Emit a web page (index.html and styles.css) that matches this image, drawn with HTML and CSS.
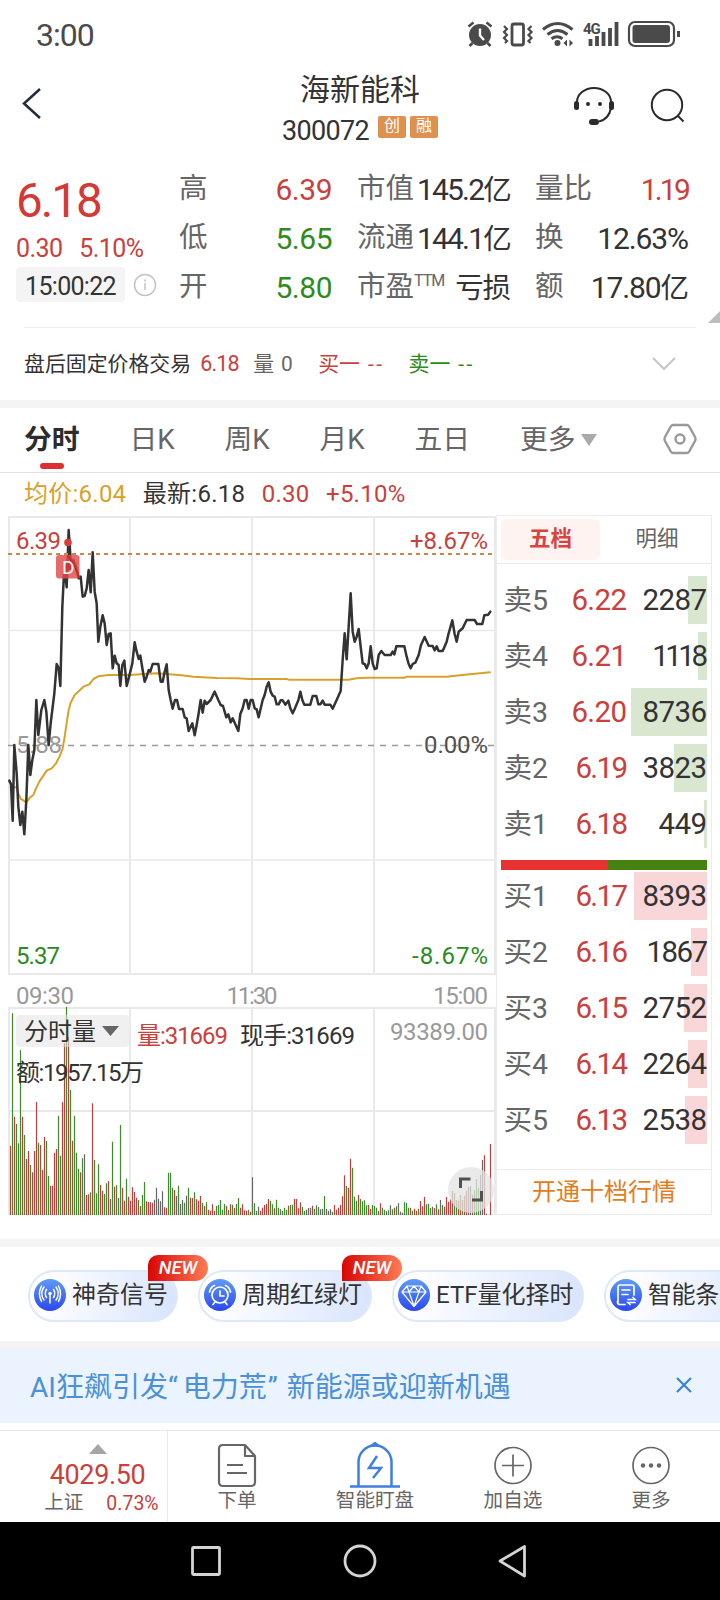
FILE: index.html
```html
<!DOCTYPE html>
<html lang="zh-CN">
<head>
<meta charset="utf-8">
<title>海新能科 300072</title>
<link rel="stylesheet" href="styles.css">
</head>
<body>
<div class="status">
  <span class="clock">3:00</span>
  <svg class="status-icons" width="216" height="40" viewBox="466 14 216 40" fill="none" stroke="#4a4a4a">
    <circle cx="480" cy="35" r="11" fill="#4a4a4a" stroke="none"/>
    <path d="M468.500 26.500l5-4M491.500 26.500l-5-4M472.500 43l-3 3M487.500 43l3 3" stroke-width="2.600"/>
    <path d="M480 28.500v7l4 4.500" stroke="#fff" stroke-width="2.400"/>
    <rect x="512" y="24" width="11.500" height="21" rx="2" stroke-width="2.800"/>
    <path d="M504 26l3 3-3 3 3 3-3 3 3 3-2 2M531.500 26l-3 3 3 3-3 3 3 3-3 3 2 2" stroke-width="2.200"/>
    <path d="M543 29.500q14.500-12 29.500 0M547.500 34.500q10-8 20 0M551.500 38.700q5.500-4 11 0" stroke-width="3"/>
    <circle cx="557.500" cy="43" r="3" fill="#4a4a4a" stroke="none"/>
    <path d="M563.500 43l3.500-3.500v7zM573 43l-3.500-3.500v7z" fill="#4a4a4a" stroke="none"/>
    <path d="M590.500 46v-7M597 46v-10M603.500 46v-14M610 46v-18M616.500 46v-24" stroke-width="3.800"/>
    <text x="583" y="34" class="net">4G</text>
    <rect x="629" y="22" width="45" height="24" rx="6" stroke-width="2.200"/>
    <rect x="632.500" y="25" width="37.500" height="18" rx="3" fill="#4a4a4a" stroke="none"/>
    <path d="M678.500 31v6" stroke-width="3"/>
  </svg>
</div>

<header class="head">
  <svg class="back" width="22" height="34" viewBox="0 0 22 34" fill="none" stroke="#222c38" stroke-width="2.500"><path d="M18 3L2 17.500 18 32"/></svg>
  <div class="title">
    <h1>海新能科</h1>
    <div class="code"><span>300072</span><i>创</i><i>融</i></div>
  </div>
  <svg class="head-icons" width="116" height="44" viewBox="572 84 116 44" fill="none" stroke="#2b2b2b" stroke-width="2">
    <path d="M577 103v-1a17 14 0 0 1 34 0v6q-2 11-12 13.500"/>
    <rect x="574" y="101" width="5" height="9" rx="2.500" fill="#2b2b2b" stroke="none"/>
    <rect x="609" y="101" width="5" height="9" rx="2.500" fill="#2b2b2b" stroke="none"/>
    <circle cx="588" cy="104" r="2" fill="#2b2b2b" stroke="none"/><circle cx="600" cy="104" r="2" fill="#2b2b2b" stroke="none"/>
    <rect x="589" y="119" width="10" height="6" rx="3" fill="#2b2b2b" stroke="none"/>
    <circle cx="667" cy="105" r="15.200"/><path d="M677.500 115.500l6 6"/>
  </svg>
</header>

<section class="quote">
  <div class="now">
    <div class="price">6.18</div>
    <div class="chg"><span>0.30</span><span>5.10%</span></div>
    <div class="time"><span class="chip">15:00:22</span>
      <svg width="24" height="24" viewBox="0 0 24 24" fill="none" stroke="#c4c4c4" stroke-width="1.500"><circle cx="12" cy="12" r="10.500"/><path d="M12 10v7M12 6.500v2"/></svg>
    </div>
  </div>
  <div class="stats">
    <div><label>高</label><b class="red wide">6.39</b></div>
    <div><label>市值</label><b class="tight">145.2<u>亿</u></b></div>
    <div><label>量比</label><b class="red tighter">1.19</b></div>
    <div><label>低</label><b class="green wide">5.65</b></div>
    <div><label>流通</label><b class="tight">144.1<u>亿</u></b></div>
    <div><label>换</label><b>12.63%</b></div>
    <div><label>开</label><b class="green wide">5.80</b></div>
    <div><label>市盈<sup>TTM</sup></label><b><u>亏损</u></b></div>
    <div><label>额</label><b>17.80<u>亿</u></b></div>
  </div>
  <span class="corner"></span>
</section>

<section class="after">
  <span>盘后固定价格交易</span><span class="red num">6.18</span><span class="vol">量<q>0</q></span>
  <span class="red buy">买一<q class="dash">--</q></span><span class="green">卖一<q class="dash">--</q></span>
  <svg width="26" height="16" viewBox="0 0 26 16" fill="none" stroke="#c8c8c8" stroke-width="2.200"><path d="M2 2l11 11L24 2"/></svg>
</section>

<nav class="tabs">
  <span class="on">分时</span><span>日K</span><span>周K</span><span>月K</span><span>五日</span><span class="more">更多<i></i></span>
  <svg width="34" height="32" viewBox="0 0 34 32" fill="none" stroke="#999" stroke-width="2.400" stroke-linejoin="round"><path d="M10 2h14q1.500 0 2.500 2l5.500 10q1 2 0 4l-5.500 10q-1 2-2.500 2H10q-1.500 0-2.500-2L2 18q-1-2 0-4L7.500 4Q8.500 2 10 2z"/><circle cx="17" cy="16" r="4.500"/></svg>
</nav>

<div class="legend"><span class="gold">均价:6.04</span><span>最新:6.18</span><span class="red">0.30</span><span class="red">+5.10%</span></div>

<main class="market">
  <svg class="charts" width="496" height="706" viewBox="0 510 496 706">
    <g fill="none" stroke="#e9e9e9" stroke-width="2">
      <path d="M9 516v458M130 516v458M252 516v458M374 516v458M495 516v458M8 517h488M8 974h488"/>
      <path d="M9 1007v207M130 1007v207M252 1007v207M374 1007v207M495 1007v207M8 1008h488M8 1111h488"/>
      <path d="M8 630.500h488M8 860h488M8 1214.500h488" stroke-width="1.500"/>
    </g>
    <path d="M8 745.500h486" stroke="#999" stroke-width="1.700" stroke-dasharray="6 6"/>
    <g class="t24">
      <text x="16" y="753" fill="#9a9a9a" textLength="46">5.88</text>
      <text x="16" y="549" fill="#c9403c" textLength="45">6.39</text>
    </g>
    <g transform="translate(0 510) scale(.33333)" fill="none" stroke-linejoin="round" stroke-linecap="round">
      <path stroke="#d9a12c" stroke-width="6" d="M28 815L38 835 50 830 55 850 62 866 79 877 90 862 100 855 106 840 118 815 130 797 140 782 155 775 168 760 180 737 188 715 194 680 200 640 206 600 212 578 224 555 240 540 252 529 268 523 280 507 295 499 325 495 390 495 430 492 470 490 545 496 580 500 650 504 710 505 750 507 860 507 866 509 1045 509 1070 505 1100 503 1215 503 1220 500 1340 500 1380 496 1440 490 1470 487"/>
      <path stroke="#333" stroke-width="7.500" d="M28 812L33 822 38 932 43 705 50 790 55 890 61 945 67 905 73 973 79 870 85 705 91 795 97 750 103 720 109 570 115 675 124 600 133 570 139 605 146 705 152 640 163 550 170 462 176 475 181 528 187 290 193 170 200 232 206 60 212 150 220 150 228 170 236 205 242 200 248 260 254 258 260 235 266 180 272 247 278 127 284 245 290 280 295 395 301 350 308 316 314 340 320 405 326 372 332 370 338 475 344 437 350 460 356 465 361 528 367 465 373 452 380 528 386 505 397 460 404 397 410 425 416 447 421 437 428 480 434 515 440 500 446 480 451 485 458 462 475 462 482 515 488 515 493 490 500 463 506 540 512 570 518 596 525 570 531 570 537 597 548 597 554 622 560 625 566 663 577 640 584 676 590 645 596 610 602 570 608 608 614 572 620 582 632 570 644 545 655 570 662 585 669 588 679 622 685 613 692 637 698 625 715 663 721 612 728 595 734 570 740 570 746 596 752 570 758 570 764 595 770 598 776 622 788 570 794 555 800 530 806 517 812 545 818 557 824 560 830 583 836 583 842 571 848 571 856 584 865 572 871 595 878 610 884 597 895 571 901 545 907 570 913 584 931 584 938 558 949 558 955 583 961 583 968 572 974 584 991 584 998 596 1010 570 1022 543 1028 450 1034 370 1040 448 1046 350 1052 250 1058 365 1064 395 1070 380 1076 357 1082 410 1088 460 1094 462 1100 475 1106 460 1112 409 1118 460 1124 477 1130 475 1136 435 1144 423 1154 435 1172 435 1178 425 1183 433 1189 409 1213 409 1220 440 1226 462 1232 475 1238 462 1246 458 1256 435 1263 405 1274 381 1286 407 1298 408 1304 421 1310 409 1316 423 1328 423 1340 395 1346 370 1357 331 1364 372 1370 395 1376 365 1388 355 1400 330 1424 330 1431 342 1447 342 1453 316 1465 314 1471 305"/>
    </g>
    <path d="M8 554h486" stroke="#c28a4e" stroke-width="1.800" stroke-dasharray="4 4"/>
    <circle cx="68" cy="542.500" r="3.800" fill="#d93a3a"/>
    <rect x="56" y="555" width="23.500" height="23.500" rx="3" fill="#e34a4a" fill-opacity=".82"/>
    <path d="M68 556q3 4 7 10l4 12" fill="none" stroke="#c22f33" stroke-width="2.200"/>
    <circle cx="69" cy="566.500" r="3.500" fill="#d93036"/>
    <text x="62" y="574" fill="#fff" class="mark">D</text>
    <g class="t24">
      <text x="488" y="549" fill="#c9403c" text-anchor="end" textLength="78">+8.67%</text>
      <text x="488" y="753" fill="#505050" text-anchor="end" textLength="64">0.00%</text>
      <text x="16" y="964" fill="#2a8a22" textLength="44">5.37</text>
      <text x="488" y="964" fill="#2a8a22" text-anchor="end" textLength="76">-8.67%</text>
      <g fill="#999">
        <text x="16" y="1004" textLength="58">09:30</text>
        <text x="252" y="1004" text-anchor="middle" textLength="51">11:30</text>
        <text x="488" y="1004" text-anchor="end" textLength="55">15:00</text>
        <text x="488" y="1040" text-anchor="end" textLength="98">93389.00</text>
      </g>
    </g>
    <rect x="16" y="1015" width="113" height="32" rx="4" fill="#f0f0f0"/>
    <path id="vol-red" stroke="#b8403e" stroke-width="1.200"/>
    <path id="vol-green" stroke="#3c8c2c" stroke-width="1.200"/>
    <path id="vol-flat" stroke="#666" stroke-width="1.200"/>
    <rect x="16" y="1015" width="113" height="32" rx="4" fill="#f0f0f0" fill-opacity=".5"/>
    <g class="t24" fill="#333">
      <text x="24" y="1040" textLength="72">分时量</text>
      <path d="M102 1026h17l-8.500 10z" fill="#666"/>
      <text x="137" y="1044" fill="#c9403c" textLength="91">量:31669</text>
      <text x="240" y="1044" textLength="115">现手:31669</text>
      <text x="16" y="1080.500" textLength="128">额:1957.15万</text>
    </g>
    <circle cx="471" cy="1190" r="23" fill="#e3e3e3" fill-opacity=".75"/>
    <path d="M460.500 1188v-9h10M472 1200h9.500v-9" fill="none" stroke="#505050" stroke-width="3"/>
  </svg>

  <aside class="book">
    <div class="book-tabs"><span class="on">五档</span><span>明细</span></div>
    <div class="rows sell">
      <div><label>卖5</label><b>6.22</b><em style="--w:19px">2287</em></div>
      <div><label>卖4</label><b>6.21</b><em class="ones" style="--w:9px">1118</em></div>
      <div><label>卖3</label><b>6.20</b><em style="--w:76px">8736</em></div>
      <div><label>卖2</label><b class="one">6.19</b><em style="--w:33px">3823</em></div>
      <div><label>卖1</label><b class="one">6.18</b><em style="--w:3px">449</em></div>
    </div>
    <div class="ratio"></div>
    <div class="rows bid">
      <div><label>买1</label><b class="one">6.17</b><em style="--w:73px">8393</em></div>
      <div><label>买2</label><b class="one">6.16</b><em class="one" style="--w:16px">1867</em></div>
      <div><label>买3</label><b class="one">6.15</b><em style="--w:23px">2752</em></div>
      <div><label>买4</label><b class="one">6.14</b><em style="--w:19px">2264</em></div>
      <div><label>买5</label><b class="one">6.13</b><em style="--w:22px">2538</em></div>
    </div>
    <div class="open">开通十档行情</div>
  </aside>
</main>

<svg class="defs" width="0" height="0"><defs><linearGradient id="orb" x1="0" y1="0" x2="0" y2="1"><stop offset="0" stop-color="#5f9bf8"/><stop offset="1" stop-color="#2b48ee"/></linearGradient></defs></svg>

<section class="tools">
  <div class="pill p1">
    <svg width="32" height="32" viewBox="0 0 32 32" fill="none" stroke="#fff" stroke-width="1.500" stroke-linecap="round"><circle cx="16" cy="16" r="16" fill="url(#orb)" stroke="none"/><circle cx="16" cy="14.500" r="1.800" fill="#fff" stroke="none"/><path d="M16 15v9M12.500 18.500q-2.500-4 0-8M19.500 18.500q2.500-4 0-8M10 21q-4.500-6.500 0-13M22 21q4.500-6.500 0-13M7.500 22.500q-4-8 0-15.500M24.500 22.500q4-8 0-15.500"/></svg>
    <span>神奇信号</span><i class="new">NEW</i>
  </div>
  <div class="pill p2">
    <svg width="32" height="32" viewBox="0 0 32 32" fill="none" stroke="#fff" stroke-width="1.700" stroke-linecap="round"><circle cx="16" cy="16" r="16" fill="url(#orb)" stroke="none"/><circle cx="16" cy="16" r="8"/><path d="M16 12v5h4M5.500 13q1-5 5-6.500M26.500 13q-1-5-5-6.500M11 23l-2 2.500M21 23l2 2.500"/></svg>
    <span>周期红绿灯</span><i class="new">NEW</i>
  </div>
  <div class="pill p3">
    <svg width="32" height="32" viewBox="0 0 32 32" fill="none" stroke="#fff" stroke-width="1.200" stroke-linejoin="round"><circle cx="16" cy="16" r="16" fill="url(#orb)" stroke="none"/><path d="M9 7h14l5 6-12 14.500L4 13zM4 13h24M9 7l2 6 5 14 5-14 2-6M11 13l5-6 5 6"/></svg>
    <span>ETF量化择时</span>
  </div>
  <div class="pill p4">
    <svg width="32" height="32" viewBox="0 0 32 32" fill="none" stroke="#fff" stroke-width="1.700" stroke-linecap="round"><circle cx="16" cy="16" r="16" fill="url(#orb)" stroke="none"/><path d="M24 16V8q0-2-2-2H10Q8 6 8 8v15h-.5q0 2.500 2.500 2.500h5M12 11h8M12 15.500h6M18 20.500h7l-2-2M25 23.500h-7l2 2"/></svg>
    <span>智能条</span>
  </div>
</section>

<div class="banner"><span>AI狂飙引发<s class="ql">“</s>电力荒<s class="qr">”</s>新能源或迎新机遇</span>
  <svg width="16" height="16" viewBox="0 0 16 16" stroke="#3d84d4" stroke-width="2.200"><path d="M1 1l14 14M15 1L1 15"/></svg>
</div>

<footer class="dock">
  <div class="index"><i></i><b>4029.50</b><div><span>上证</span><em>0.73%</em></div></div>
  <div class="act"><svg width="50" height="46" viewBox="0 0 50 46" fill="none" stroke="#666" stroke-width="2.200" stroke-linejoin="round"><path d="M33 3H11q-4 0-4 4v33q0 4 4 4h28q4 0 4-4V14zM33 3v11h10M15 23h16M15 31h20"/></svg><span>下单</span></div>
  <div class="act"><svg width="50" height="46" viewBox="0 0 50 46" fill="none" stroke="#3f7fe0" stroke-width="2.500"><path d="M0 44.500h50M8.500 44V20a16.500 16.500 0 0 1 33 0v24"/><path d="M22 3.500l3-2.500 3 2.500z" fill="#3f7fe0"/><path d="M27 14l-8 12h12l-8 10"/></svg><span>智能盯盘</span></div>
  <div class="act"><svg width="50" height="46" viewBox="0 0 50 46" fill="none" stroke="#666" stroke-width="1.700"><circle cx="25" cy="23.500" r="18"/><path d="M14 23.500h22M25 12.500v22"/></svg><span>加自选</span></div>
  <div class="act"><svg width="50" height="46" viewBox="0 0 50 46" fill="none" stroke="#666" stroke-width="1.700"><circle cx="25" cy="23.500" r="18"/><g fill="#666" stroke="none"><circle cx="17" cy="23.500" r="2.200"/><circle cx="25" cy="23.500" r="2.200"/><circle cx="33" cy="23.500" r="2.200"/></g></svg><span>更多</span></div>
</footer>

<div class="sysnav">
  <svg width="720" height="78" viewBox="0 0 720 78" fill="none" stroke="#d4d4d4" stroke-width="2.800" stroke-linejoin="round"><rect x="192.500" y="25.500" width="27" height="27" rx="1"/><circle cx="360" cy="39" r="15"/><path d="M524.500 24.500v29.500L500 39z"/></svg>
</div>
<script src="chart.js"></script>
</body>
</html>
```
FILE: styles.css
```css
* { box-sizing: border-box; }
body { margin: 0; width: 720px; height: 1600px; overflow: hidden; background: #fff; color: #333; font-family: Roboto, "Noto Sans CJK SC", sans-serif; }
b, i, em, h1 { font-weight: 400; font-style: normal; margin: 0; }
s, u { text-decoration: none; }
q { quotes: none; }
.red { color: #c9403c !important; }
.green { color: #2f8a20 !important; }
.gold { color: #d9a12c; }
.defs { display: block; height: 0; }

.status { height: 70px; display: flex; justify-content: space-between; padding: 14px 38px 0 36px; }
.clock { font-size: 32px; line-height: 43px; letter-spacing: -1px; color: #4a4a4a; }
.net { font: 700 15px Roboto, sans-serif; fill: #4a4a4a; stroke: none; letter-spacing: -1px; }

.head { height: 94px; display: grid; grid-template-columns: 160px 1fr 160px; padding: 0 32px 0 22px; }
.back { margin-top: 16px; }
.title { text-align: center; padding: 2px 0 0 10px; }
.title h1 { font-size: 30px; line-height: 36px; }
.code { display: flex; justify-content: center; gap: 4px; height: 36px; margin-top: 4px; }
.code span { font-size: 27px; line-height: 38px; letter-spacing: -.7px; margin-right: 5px; }
.code i { width: 28px; height: 22px; margin-top: 4px; border-radius: 2px; background: #df9150; color: #fff; font-size: 16px; line-height: 20px; }
.head-icons { justify-self: end; margin-top: 14px; }

.quote { position: relative; height: 163.500px; margin: 0 24px; padding-left: 155px; border-bottom: 1.5px solid #ededed; display: flex; }
.now { width: 163px; margin-left: -163px; }
.price { height: 72px; font-size: 47.500px; line-height: 74px; letter-spacing: -2px; color: #d53935; }
.chg { display: flex; gap: 17px; height: 30px; margin-top: -2px; font-size: 25px; line-height: 30px; letter-spacing: -.6px; color: #c9403c; }
.time { display: flex; align-items: center; gap: 8px; margin-top: 3px; }
.chip { width: 109px; height: 35px; border-radius: 4px; background: #f4f4f4; text-align: center; font-size: 25px; line-height: 39px; letter-spacing: -.7px; }
.stats { flex: none; width: 510px; height: 147px; margin-top: 1.500px; display: grid; grid-template-columns: 153px 153px 153px; grid-template-rows: repeat(3, 49px); column-gap: 25px; }
.stats div { display: flex; justify-content: space-between; align-items: center; white-space: nowrap; height: 48px; min-width: 0; }
.stats label { font-size: 28.500px; color: #666; line-height: 48px; height: 50px; }
.stats b { font-size: 30px; letter-spacing: -1.100px; line-height: 50px; height: 50px; }
.stats b.wide { letter-spacing: -.5px; }
.stats b.tight { letter-spacing: -1.800px; }
.stats b.tighter { letter-spacing: -2.800px; }
.stats u { font-size: 28.500px; }
.stats sup { font-size: 16px; line-height: 0; vertical-align: 10px; letter-spacing: -1px; }
.corner { position: absolute; right: -24px; bottom: 4px; border-left: 12px solid transparent; border-bottom: 12px solid #bdbdbd; }

.after { height: 72.500px; display: flex; align-items: center; padding: 0 43px 4px 24px; font-size: 20.900px; white-space: nowrap; }
.after .num { width: 37px; margin: 4px 0 0 9px; letter-spacing: -.8px; font-size: 21.500px; }
.after .vol { width: 41px; margin-left: 16px; color: #666; }
.after .vol q { margin-left: 7px; }
.after .buy { margin: 0 24px 0 24px; }
.after .dash { margin-left: 8px; letter-spacing: 2.500px; }
.after svg { margin: 4px 0 0 auto; }

.tabs { position: relative; height: 73px; border-top: 8px solid #f4f4f4; border-bottom: 1.500px solid #e2e2e2; display: flex; align-items: center; padding: 0 23px 7px 24px; font-size: 27.800px; color: #666; white-space: nowrap; }
.tabs span { position: relative; flex: none; }
.tabs span + span { margin-left: 49.800px; }
.tabs .on { font-weight: 700; color: #2c2c2c; }
.tabs .on::after { content: ""; position: absolute; left: 16px; bottom: -12px; width: 24px; height: 6px; border-radius: 3px; background: #dc3030; }
.tabs .more i { display: inline-block; margin: 0 0 3px 5px; border: 8px solid transparent; border-top: 12px solid #aaa; border-bottom: 0; }
.tabs svg { margin: 5px 0 0 auto; }

.legend { height: 37px; padding-left: 24px; display: flex; gap: 16.500px; font-size: 24px; line-height: 43px; letter-spacing: .25px; }

.market { height: 737px; border-bottom: 8px solid #f4f4f4; display: flex; }
.charts { flex: none; display: block; }
.t24 { font: 24px Roboto, "Noto Sans CJK SC", sans-serif; }
.mark { font: 19px Roboto, sans-serif; }
.book { width: 216px; height: 700px; margin-top: 5px; border: 1.500px solid #ececec; }
.book-tabs { height: 48px; border-bottom: 1.500px solid #ececec; display: flex; padding: 3px 4px; font-size: 21.500px; color: #666; }
.book-tabs span { flex: none; width: 99px; height: 41px; line-height: 40px; text-align: center; }
.book-tabs .on { background: #fff3f2; border-radius: 6px; color: #d9423e; font-weight: 700; }
.book-tabs span + span { width: 114px; }
.rows { display: grid; grid-auto-rows: 48px; row-gap: 8px; padding: 12px 4px 0 6.500px; }
.rows div { display: grid; grid-template-columns: 50px 73px 80px; line-height: 48px; font-size: 29.500px; white-space: nowrap; }
.rows label { font-size: 28.500px; color: #666; line-height: 49px; height: 48px; }
.rows b { text-align: right; color: #c9403c; letter-spacing: -.6px; }
.rows em { text-align: right; letter-spacing: -.6px; background: linear-gradient(#d9e6d0, #d9e6d0) right / var(--w) 100% no-repeat; }
.rows .one { letter-spacing: -1.600px; }
.rows .ones { letter-spacing: -3.500px; padding-right: 2px; }
.bid em { background-image: linear-gradient(#f9d7d8, #f9d7d8); }
.bid { padding-top: 2px; }
.ratio { height: 10px; margin: 12px 4px 0; background: linear-gradient(90deg, #e83232 0 52%, #45820f 52%); }
.open { margin-top: 25px; border-top: 1.500px solid #ececec; text-align: center; font-size: 24px; line-height: 44px; color: #e37d1c; }

.tools { height: 102px; border-bottom: 8px solid #f4f4f4; padding: 23px 0 0 28px; display: flex; gap: 20px; overflow: hidden; }
.pill { position: relative; flex: none; display: flex; align-items: center; gap: 6px; height: 52px; padding: 0 0 2px 6px; border: 2px solid #dfe8f7; border-radius: 26px; background: linear-gradient(100deg, #fff 10%, #d8e4fd); font-size: 24px; white-space: nowrap; line-height: 46px; }
.p1 { width: 150px; }
.p2 { width: 174px; }
.p3 { width: 192px; }
.p4 { width: 176px; }
.p4 span { letter-spacing: -.4px; }
.pill svg { flex: none; margin-left: -2px; }
.new { position: absolute; right: -32px; top: -17px; width: 60px; height: 26px; border-radius: 10px 13px 13px 0; background: linear-gradient(90deg, #d80505, #ff7b55); color: #fff; font: italic 500 18.500px/26px Roboto, sans-serif; text-align: center; z-index: 1; }

.banner { height: 74px; background: #eaf3fe; display: flex; align-items: center; justify-content: space-between; padding: 0 28px 3px 30px; font-size: 28px; color: #4b90d8; white-space: nowrap; }
.banner .ql { margin-right: 5px; }
.banner .qr { margin: 0 9px 0 1px; }

.dock { height: 92px; margin-top: 7px; border-top: 1.500px solid #e8e8e8; display: grid; grid-template-columns: 168px repeat(4, 138px); }
.index { border-right: 1.500px solid #e8e8e8; padding-left: 28px; display: flex; flex-direction: column; align-items: center; color: #c9403c; }
.index i { margin-top: 13px; border: 9px solid transparent; border-top: 0; border-bottom: 10px solid #a5a5a5; }
.index b { font-size: 27px; line-height: 43px; letter-spacing: -.4px; height: 37px; }
.index div { display: flex; gap: 23px; font-size: 19.500px; line-height: 23px; padding-left: 8px; }
.index span { color: #666; }
.index em { line-height: 26px; }
.act { display: flex; flex-direction: column; align-items: center; color: #666; font-size: 19.600px; line-height: 26px; }
.act svg { margin-top: 11px; }
.sysnav { height: 78px; background: #000; }
.sysnav svg { display: block; }
```
FILE: chart.js
```javascript
// One entry per minute: colour (r up, g down, k flat) and the bar's top, in thirds of a pixel below y=940.
const bars = `r617 g220 r530 g552 g610 g330 r530 g585 r657 r633 g675 r697 r633 r486 g608 r615 r690 r591 g603 g708
r737 r737 r638 r627 g527 g647 r487 r310 g200 r290 g450 r602 g527 g638 g686 r697 g655 k643 r765 r763
g757 r490 g660 g760 g673 r735 r752 g762 g730 r723 k777 g605 r740 g736 k774 g555 r743 r782 g716 r770
r782 r742 r756 r773 g780 r798 g765 g726 r784 r786 r787 r788 k779 k743 k776 k784 k754 r802 r803 g698
g698 g743 r750 k768 g737 k792 k780 g788 k767 g743 r773 r774 g757 r778 r782 r768 g788 r798 g787 r809
r812 r793 r812 g798 g795 g780 g809 g792 r797 g810 r793 g794 r804 g792 g774 r803 r793 r811 r812 g809
r815 k712 g790 g813 k800 r812 r803 r795 r791 r777 g782 g793 r805 g779 g803 k808 g813 g803 g809 r797
g795 g794 r777 r777 r805 r787 g801 g813 k809 k804 k803 r797 g806 k796 g801 k808 k807 g768 k807 k812
k808 g815 r795 r809 r803 r795 r769 r706 g738 r743 r656 g683 g770 g782 r765 g777 g784 g781 g796 r795
r807 g795 g798 g803 k813 r790 g803 g810 k814 g811 k796 g808 r803 g799 k790 k815 k818 g787 g789 g803
r803 g812 r806 r812 g806 r783 r799 r771 g793 g791 g804 k800 r804 g793 r808 k780 g795 r800 r771 r785
r778 r753 g759 g780 r782 r765 g780 r767 r752 k741 k738 r764 g750 g718 g743 k705 k660 r646 k821 k825 r612`.split(/\s+/);

const paths = { r: '', g: '', k: '' };
bars.forEach((bar, i) => {
  const x = 10.5 + i * 2;
  const top = 940 + Number(bar.slice(1)) / 3;
  paths[bar[0]] += `M${x} ${top.toFixed(1)}V1215`;
});
document.getElementById('vol-red').setAttribute('d', paths.r);
document.getElementById('vol-green').setAttribute('d', paths.g);
document.getElementById('vol-flat').setAttribute('d', paths.k);
```
